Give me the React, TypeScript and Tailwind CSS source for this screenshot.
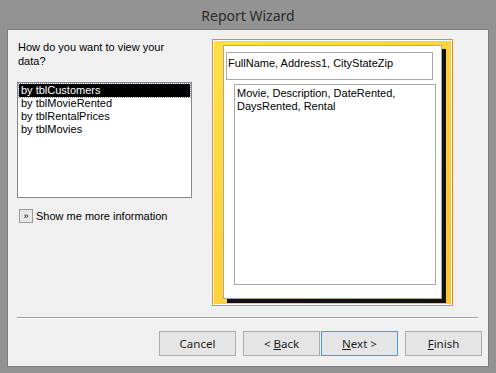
import React from "react";

const ui = { fontFamily: '"Liberation Sans", Arial, sans-serif' };
const seg = { fontFamily: '"Noto Sans", "Open Sans", sans-serif' };

function Btn({ children, focus }: { children: React.ReactNode; focus?: boolean }) {
  return (
    <div
      className={
        "w-[77px] h-[25px] flex items-center justify-center text-[11.5px] text-[#1a1a1a] bg-[#e5e5e5] border " +
        (focus ? "border-[#3c9ef0]" : "border-[#acacac]")
      }
      style={seg}
    >
      <span>{children}</span>
    </div>
  );
}

export default function App() {
  const items = ["by tblCustomers", "by tblMovieRented", "by tblRentalPrices", "by tblMovies"];
  return (
    <div className="w-[496px] h-[373px] bg-[#939393] flex flex-col overflow-hidden">
      <div className="h-[29px] flex items-center justify-center text-[14px] text-[#2b2b2b] pt-[1px]" style={seg}>
        Report Wizard
      </div>
      <div className="ml-[7px] w-[482px] h-[338px] border border-[#7d7d7d] bg-[#f0f0f0] flex flex-col">
        <div className="flex pl-[9px] pt-[9px]">
          <div className="w-[175px] flex flex-col" style={ui}>
            <div className="text-[11px] leading-[14px] text-black pl-[1px] pt-[1px]">
              How do you want to view your
              <br />
              data?
            </div>
            <div className="mt-[14px] h-[116px] border border-[#828790] bg-white pt-[1px] px-[1px]">
              {items.map((t, i) => (
                <div
                  key={t}
                  className={
                    "h-[13px] leading-[13px] text-[11px] pl-[2px] " +
                    (i === 0 ? "bg-black text-white outline outline-1 outline-dotted outline-[#888]" : "text-black")
                  }
                >
                  {t}
                </div>
              ))}
            </div>
            <div className="flex items-center mt-[10px] ml-[2px]">
              <div className="w-[14px] h-[14px] border border-[#9a9a9a] bg-[#e8e8e8] flex items-center justify-center text-[9px] leading-none text-black">
                »
              </div>
              <span className="ml-[3px] text-[11px] text-black">Show me more information</span>
            </div>
          </div>
          <div className="ml-[20px] w-[241px] h-[267px] border border-[#f08a10] p-[1px] bg-white">
            <div className="w-full h-full bg-gradient-to-br from-[#ffdf45] to-[#fbc431] pl-[9px] pt-[4px]">
              <div
                className="w-[219px] h-[254px] bg-white border border-[#a8a8a8] shadow-[4px_4px_0_#111] flex flex-col"
                style={ui}
              >
                <div className="ml-[2px] mt-[6px] w-[207px] h-[28px] border border-[#a8a8a8] text-[11px] text-black pl-[1px] pt-[3px] leading-[14px]">
                  FullName, Address1, CityStateZip
                </div>
                <div className="ml-[10px] mt-[4px] w-[202px] h-[201px] border border-[#a8a8a8] text-[11px] text-black pl-[2px] pt-[2px] leading-[13px]">
                  Movie, Description, DateRented,
                  <br />
                  DaysRented, Rental
                </div>
              </div>
            </div>
          </div>
        </div>
        <div className="ml-[9px] mt-[11px] w-[461px] h-[2px] border-t border-t-[#a0a0a0] border-b border-b-white" />
        <div className="flex mt-[12px] pl-[151px]">
          <Btn>Cancel</Btn>
          <div className="ml-[7px]">
            <Btn>
              &lt; <u>B</u>ack
            </Btn>
          </div>
          <div className="ml-[1px]">
            <Btn focus>
              <u>N</u>ext &gt;
            </Btn>
          </div>
          <div className="ml-[7px]">
            <Btn>
              <u>F</u>inish
            </Btn>
          </div>
        </div>
      </div>
    </div>
  );
}
